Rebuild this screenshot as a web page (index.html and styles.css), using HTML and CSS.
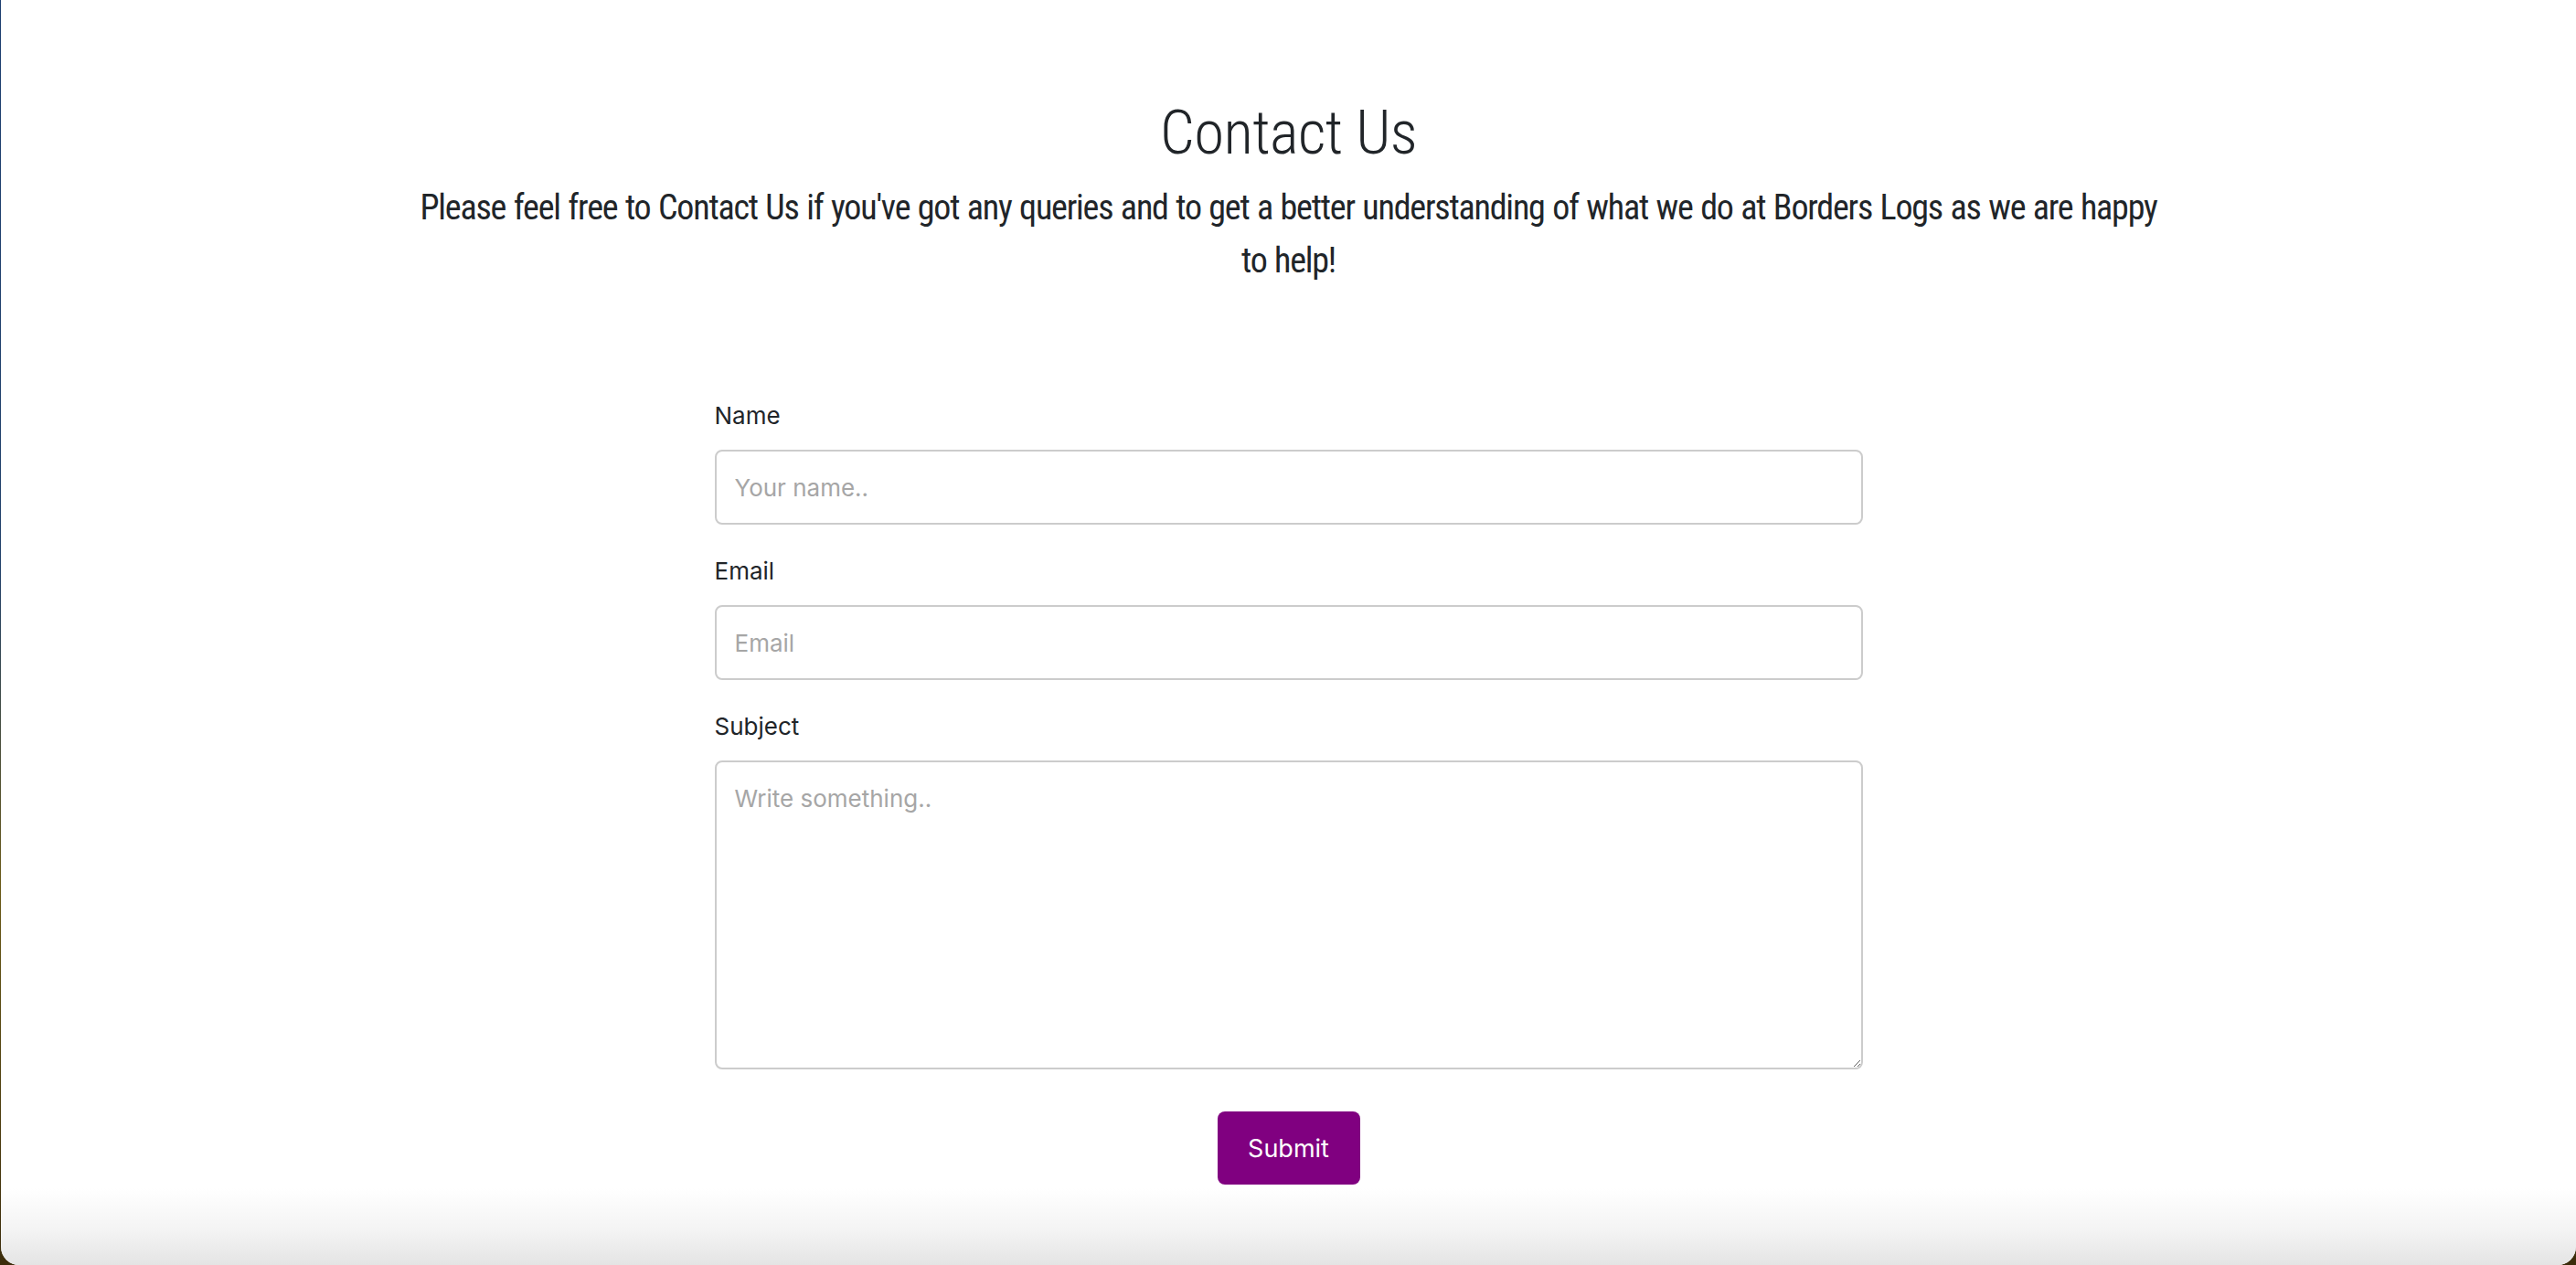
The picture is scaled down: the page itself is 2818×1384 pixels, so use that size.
FILE: index.html
```html
<!DOCTYPE html>
<html lang="en">
<head>
<meta charset="utf-8">
<title>Contact Us</title>
<link rel="stylesheet" href="styles.css">
</head>
<body>
<div class="window">
  <main class="contact">
    <h1 class="contact-title">Contact Us</h1>
    <p class="contact-lead">Please feel free to Contact Us if you've got any queries and to get a better understanding of what we do at Borders Logs as we are happy to help!</p>
    <form class="contact-form">
      <div class="field">
        <label class="field-label" for="name">Name</label>
        <input class="field-input" id="name" type="text" placeholder="Your name..">
      </div>
      <div class="field">
        <label class="field-label" for="email">Email</label>
        <input class="field-input" id="email" type="email" placeholder="Email">
      </div>
      <div class="field">
        <label class="field-label" for="subject">Subject</label>
        <textarea class="field-input field-area" id="subject" placeholder="Write something.."></textarea>
      </div>
      <div class="actions">
        <button class="submit" type="button">Submit</button>
      </div>
    </form>
  </main>
  <div class="fold-shadow"></div>
</div>
</body>
</html>
```
FILE: styles.css
```css
html {
  background: linear-gradient(to bottom, #1d3f70 0%, #23426b 45%, #6a5a18 70%, #3b2c0b 100%);
}
body {
  margin: 0;
}
.window {
  margin-left: 1px;
  min-height: 1384px;
  background: #fff;
  border-bottom-left-radius: 20px;
  border-bottom-right-radius: 20px;
  overflow: hidden;
  display: flex;
  flex-direction: column;
}
.contact {
  padding-top: 105px;
  color: #212529;
}
.contact-title {
  margin: 0;
  text-align: center;
  font-family: "Roboto Condensed", "Noto Sans", "DejaVu Sans", sans-serif;
  font-stretch: condensed;
  font-weight: 300;
  font-size: 67px;
  letter-spacing: -0.6px;
  line-height: 80px;
  color: #212529;
}
.contact-lead {
  width: 1925px;
  margin: 14px auto 0;
  text-align: center;
  font-family: "Roboto Condensed", "Noto Sans", "DejaVu Sans", sans-serif;
  font-stretch: condensed;
  font-size: 38px;
  letter-spacing: -1.2px;
  word-spacing: 1px;
  line-height: 57.5px;
  color: #212529;
}
.contact-form {
  width: 1256px;
  margin: 121px auto 0;
  font-family: Inter, "Liberation Sans", sans-serif;
}
.field {
  margin-bottom: 31px;
}
.field-label {
  display: block;
  font-size: 26px;
  line-height: 39px;
  margin-bottom: 18px;
  color: #212529;
}
.field-input {
  display: block;
  box-sizing: border-box;
  width: 100%;
  height: 82px;
  padding: 0 20px;
  border: 2px solid #cccccc;
  border-radius: 8px;
  font-family: Inter, "Liberation Sans", sans-serif;
  font-size: 26px;
  color: #212529;
  background: #fff;
  outline: none;
}
.field-input::placeholder {
  color: #a6a6a6;
}
.field-area {
  height: 338px;
  padding: 24px 20px 20px;
  resize: vertical;
}
.field:last-of-type {
  margin-bottom: 0;
}
.actions {
  display: flex;
  justify-content: center;
  margin-top: 46px;
}
.submit {
  width: 156px;
  height: 80px;
  border: none;
  border-radius: 8px;
  background: #800080;
  color: #fff;
  font-family: Inter, "Liberation Sans", sans-serif;
  font-size: 27px;
  cursor: pointer;
}
.fold-shadow {
  margin-top: auto;
  height: 84px;
  background: linear-gradient(to bottom, rgba(230,230,230,0) 0%, rgba(236,236,236,0.6) 55%, #e4e4e4 100%);
}
```
